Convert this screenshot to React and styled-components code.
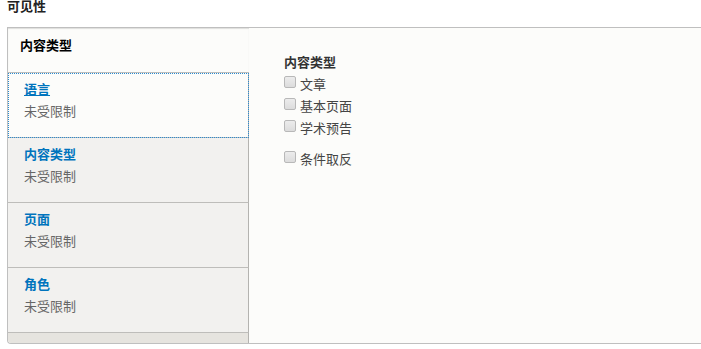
import React from 'react';
import styled, { createGlobalStyle } from 'styled-components';

const GlobalStyle = createGlobalStyle`
	body {
		margin: 0;
		background: #fff;
		font-family: 'Liberation Sans', 'Noto Sans CJK SC', sans-serif;
		color: #333;
	}
`;

const Page = styled.div`
	padding-left: 7px;
	width: 694px;
`;

const Title = styled.h2`
	margin: 0;
	font-size: 13px;
	line-height: 14px;
	font-weight: 700;
	color: #222;
`;

const Frame = styled.div`
	margin-top: 13px;
	display: flex;
	height: 315px;
	border-top: 1px solid #bfbfbf;
	border-left: 1px solid #bfbfbf;
	border-bottom: 1px solid #bfbfbf;
	border-bottom-left-radius: 4px;
	overflow: hidden;
	background: #fcfcfa;
`;

const Menu = styled.ul`
	list-style: none;
	margin: 0;
	padding: 0;
	width: 241px;
	display: flex;
	flex-direction: column;
	background: #e6e4df;
`;

const Item = styled.li`
	box-sizing: border-box;
	height: ${(p) => (p.$selected ? '45px' : '65px')};
	padding: ${(p) => (p.$selected ? '9px 12px' : '8px 16px')};
	background: ${(p) => (p.$selected || p.$focused ? '#fcfcfa' : '#f2f1ef')};
	border-bottom: 1px solid #bebdba;
	border-right: ${(p) => (p.$selected ? 'none' : '1px solid #b4b3b0')};
	outline: ${(p) => (p.$focused ? '1px dotted #2a8bd0' : 'none')};
	outline-offset: -1px;
	box-shadow: ${(p) => (p.$selected ? 'inset 0 1px 1px rgba(0,0,0,0.12)' : 'none')};
`;

const ItemTitle = styled.div`
	font-size: 13px;
	line-height: 18px;
	font-weight: 700;
	color: ${(p) => (p.$selected ? '#000' : '#0074bd')};
	text-decoration: ${(p) => (p.$focused ? 'underline' : 'none')};
`;

const Summary = styled.div`
	margin-top: 4px;
	font-size: 13px;
	line-height: 18px;
	color: #666;
`;

const Strip = styled.li`
	flex: 1;
	border-right: 1px solid #b4b3b0;
`;

const Pane = styled.div`
	flex: 1;
	padding: 26px 35px;
`;

const Label = styled.div`
	font-size: 13px;
	line-height: 18px;
	font-weight: 700;
	color: #333;
`;

const Option = styled.label`
	display: flex;
	align-items: center;
	gap: 4px;
	height: 22px;
	font-size: 13px;
	color: #444;
	margin-top: ${(p) => (p.$spaced ? '9px' : '0')};
`;

const Box = styled.input.attrs({ type: 'checkbox' })`
	appearance: none;
	margin: 0 0 2px 0;
	width: 12px;
	height: 12px;
	border: 1px solid #b8b8b8;
	border-radius: 2px;
	background: linear-gradient(#ececec, #dcdcdc);
	box-sizing: border-box;
`;

const tabs = [
	{ title: '语言', focused: true },
	{ title: '内容类型' },
	{ title: '页面' },
	{ title: '角色' },
];

const options = ['文章', '基本页面', '学术预告'];

export default function App() {
	return (
		<>
			<GlobalStyle />
			<Page>
				<Title>可见性</Title>
				<Frame>
					<Menu>
						<Item $selected>
							<ItemTitle $selected>内容类型</ItemTitle>
						</Item>
						{tabs.map((t) => (
							<Item key={t.title} $focused={t.focused}>
								<ItemTitle $focused={t.focused}>{t.title}</ItemTitle>
								<Summary>未受限制</Summary>
							</Item>
						))}
						<Strip />
					</Menu>
					<Pane>
						<Label>内容类型</Label>
						{options.map((o) => (
							<Option key={o}>
								<Box />
								{o}
							</Option>
						))}
						<Option $spaced>
							<Box />
							条件取反
						</Option>
					</Pane>
				</Frame>
			</Page>
		</>
	);
}
